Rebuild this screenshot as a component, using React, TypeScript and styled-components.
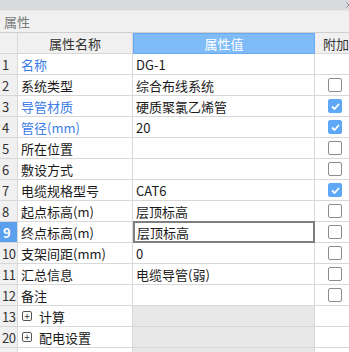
import styled, { createGlobalStyle } from "styled-components";

const GlobalStyle = createGlobalStyle`
  html, body {
    margin: 0;
    padding: 0;
    background: #ffffff;
    font-family: "Noto Sans CJK SC", "Noto Sans", "Liberation Sans", sans-serif;
    font-size: 13px;
    color: #1a1a1a;
  }
`;

type Row = {
  index: string;
  name: string;
  value?: string;
  link?: boolean;
  checked?: boolean;
  group?: boolean;
  selected?: boolean;
};

const rows: Row[] = [
  { index: "1", name: "名称", value: "DG-1", link: true },
  { index: "2", name: "系统类型", value: "综合布线系统", checked: false },
  { index: "3", name: "导管材质", value: "硬质聚氯乙烯管", link: true, checked: true },
  { index: "4", name: "管径(mm)", value: "20", link: true, checked: true },
  { index: "5", name: "所在位置", value: "", checked: false },
  { index: "6", name: "敷设方式", value: "", checked: false },
  { index: "7", name: "电缆规格型号", value: "CAT6", checked: true },
  { index: "8", name: "起点标高(m)", value: "层顶标高", checked: false },
  { index: "9", name: "终点标高(m)", value: "层顶标高", checked: false, selected: true },
  { index: "10", name: "支架间距(mm)", value: "0", checked: false },
  { index: "11", name: "汇总信息", value: "电缆导管(弱)", checked: false },
  { index: "12", name: "备注", value: "", checked: false },
  { index: "13", name: "计算", group: true },
  { index: "20", name: "配电设置", group: true },
  { index: "", name: "", group: true },
];

export default function App() {
  return (
    <>
      <GlobalStyle />
      <Panel>
        <TitleBar>
          {/* close button, clipped by the window edge */}
          <CloseIcon width="6" height="6" viewBox="0 0 6 6">
            <path d="M0.5 0.5 L5.5 5.5 M5.5 0.5 L0.5 5.5" stroke="#8a8a8a" strokeWidth="1" />
          </CloseIcon>
        </TitleBar>
        <PanelHeader>属性</PanelHeader>
        <Grid>
          <HeadCell>&nbsp;</HeadCell>
          <HeadCell>属性名称</HeadCell>
          <HeadCell $active>属性值</HeadCell>
          <HeadCell $left>附加</HeadCell>
          {rows.map((r, i) => (
            <RowCells key={i} row={r} />
          ))}
        </Grid>
      </Panel>
    </>
  );
}

function RowCells({ row }: { row: Row }) {
  return (
    <>
      <IndexCell $selected={row.selected}>{row.index}</IndexCell>
      <NameCell $link={row.link}>
        {row.group && row.name && <PlusBox>+</PlusBox>}
        {row.name}
      </NameCell>
      <ValueCell $group={row.group} $selected={row.selected}>
        {row.value}
      </ValueCell>
      <AttachCell>
        {row.checked !== undefined && (
          <CheckBox $checked={row.checked}>
            {row.checked && (
              <svg width="9" height="7" viewBox="0 0 9 7">
                <path
                  d="M1 3.5 L3.5 6 L8 1"
                  stroke="#fff"
                  strokeWidth="1.8"
                  fill="none"
                />
              </svg>
            )}
          </CheckBox>
        )}
      </AttachCell>
    </>
  );
}

const Panel = styled.div`
  width: 349px;
  height: 352px;
  overflow: hidden;
  background: #ffffff;
`;

const TitleBar = styled.div`
  height: 10px;
  background: #d9dadd;
  border-bottom: 1px solid #e6e6e8;
  display: flex;
  justify-content: flex-end;
  align-items: flex-start;
  overflow: hidden;
`;

const CloseIcon = styled.svg`
  margin: 2px -3px 0 0;
`;

const PanelHeader = styled.div`
  height: 21px;
  line-height: 21px;
  padding-left: 4px;
  background: #f0f0f0;
  color: #7a7a7a;
  border-bottom: 1px solid #cfcfcf;
`;

const Grid = styled.div`
  display: grid;
  grid-template-columns: 18px 115px 182px 60px;
  grid-auto-rows: 21px;
  width: 375px;
`;

const Cell = styled.div`
  box-sizing: border-box;
  border-right: 1px solid #d8d8d8;
  border-bottom: 1px solid #d8d8d8;
  white-space: nowrap;
  overflow: hidden;
  display: flex;
  align-items: center;
`;

const HeadCell = styled(Cell)<{ $active?: boolean; $left?: boolean }>`
  justify-content: ${(p) => (p.$left ? "flex-start" : "center")};
  padding-left: ${(p) => (p.$left ? "8px" : "0")};
  background: ${(p) => (p.$active ? "#7fbbf6" : "#f0f0f0")};
  color: ${(p) => (p.$active ? "#ffffff" : "#333333")};
  border-color: ${(p) => (p.$active ? "#68aaf0" : "#d8d8d8")};
  border-top: ${(p) => (p.$active ? "1px solid #68aaf0" : "none")};
  border-left: ${(p) => (p.$active ? "1px solid #68aaf0" : "none")};
`;

const IndexCell = styled(Cell)<{ $selected?: boolean }>`
  background: ${(p) => (p.$selected ? "#5aa0ec" : "#f0f0f0")};
  color: ${(p) => (p.$selected ? "#ffffff" : "#333333")};
  font-weight: ${(p) => (p.$selected ? "bold" : "normal")};
  padding-left: ${(p) => (p.$selected ? "3px" : "2px")};
  letter-spacing: -0.5px;
`;

const NameCell = styled(Cell)<{ $link?: boolean }>`
  padding-left: 3px;
  color: ${(p) => (p.$link ? "#3d7de6" : "#1a1a1a")};
`;

const PlusBox = styled.span`
  box-sizing: border-box;
  width: 10px;
  height: 10px;
  border: 1px solid #555;
  border-radius: 2px;
  font-size: 10px;
  line-height: 7px;
  text-align: center;
  margin: 0 7px 0 1px;
  color: #333;
`;

const ValueCell = styled(Cell)<{ $group?: boolean; $selected?: boolean }>`
  padding-left: 3px;
  background: ${(p) => (p.$group ? "#e8e8e8" : "#ffffff")};
  ${(p) =>
    p.$selected &&
    `
    border: 2px solid #7f7f7f;
    padding-left: 2px;
    margin-top: -1px;
    height: 22px;
  `}
`;

const AttachCell = styled(Cell)`
  padding-left: 13px;
`;

const CheckBox = styled.span<{ $checked?: boolean }>`
  box-sizing: border-box;
  width: 14px;
  height: 14px;
  border-radius: 2px;
  border: 1px solid ${(p) => (p.$checked ? "#5ea8f7" : "#8c8c8c")};
  background: ${(p) => (p.$checked ? "#5ea8f7" : "#ffffff")};
  display: flex;
  align-items: center;
  justify-content: center;
`;
